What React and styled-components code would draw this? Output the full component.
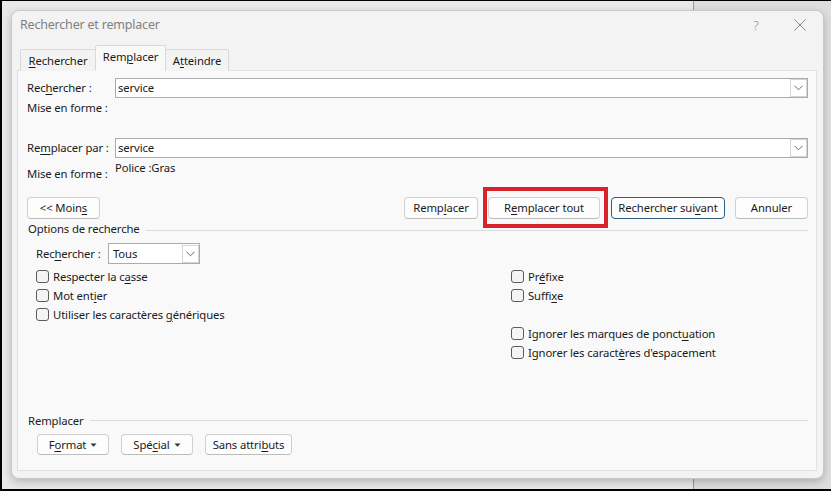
import React from "react";
import styled, { createGlobalStyle } from "styled-components";

const Global = createGlobalStyle`
  html, body { margin: 0; padding: 0; }
  body {
    font-family: "Noto Sans", "Liberation Sans", sans-serif;
    font-size: 11.3px;
    letter-spacing: -0.12px;
    color: #1b1b1b;
  }
  u { text-decoration: underline; text-underline-offset: 2px; text-decoration-thickness: 1px; }
`;

const Screen = styled.div`
  width: 831px;
  height: 491px;
  box-sizing: border-box;
  border-top: 1px solid #000;
  border-left: 2px solid #000;
  border-bottom: 2px solid #000;
  padding: 9px 0 0 9px;
  background: linear-gradient(to right, #e9e9e9 691px, #9a9a9a 691px, #9a9a9a 692px, #dedede 692px);
  overflow: hidden;
`;

const Dialog = styled.div`
  width: 813px;
  height: 469px;
  box-sizing: border-box;
  border: 1px solid #c9c9c9;
  border-radius: 8px;
  background: #f3f3f3;
  box-shadow: 0 3px 8px rgba(0, 0, 0, 0.22);
  display: flex;
  flex-direction: column;
`;

const TitleBar = styled.div`
  height: 34px;
  box-sizing: border-box;
  display: flex;
  align-items: flex-start;
  padding: 6px 1px 0 8px;
`;

const Title = styled.div`
  flex: 1;
  font-size: 12.5px;
  letter-spacing: -0.2px;
  line-height: 16px;
  color: #808080;
`;

const WinButton = styled.div`
  width: 44px;
  height: 16px;
  display: flex;
  align-items: center;
  justify-content: center;
  color: #8a8a8a;
  font-size: 13px;
  font-weight: 300;
  line-height: 16px;
`;

const TabRow = styled.div`
  display: flex;
  align-items: flex-end;
  height: 26px;
  padding-left: 8px;
  margin-bottom: -1px;
  position: relative;
  z-index: 1;
`;

const Tab = styled.div`
  height: ${(p) => (p.$active ? "26px" : "22px")};
  box-sizing: border-box;
  width: ${(p) => p.$w}px;
  margin-left: ${(p) => (p.$first ? "0" : "-1px")};
  border: 1px solid #d9d9d9;
  border-bottom: ${(p) => (p.$active ? "1px solid #f9f9f9" : "none")};
  border-radius: 2px 2px 0 0;
  background: ${(p) => (p.$active ? "#f9f9f9" : "#f3f3f3")};
  display: flex;
  align-items: center;
  justify-content: center;
  padding-top: 0;
  padding-bottom: ${(p) => (p.$active ? "3px" : "1px")};
`;

const Panel = styled.div`
  flex: 1;
  margin: 0 6px 7px 5px;
  border: 1px solid #e1e1e1;
  background: #f9f9f9;
  padding: 7px 8px 15px 9px;
  display: flex;
  flex-direction: column;
`;

const FieldRow = styled.div`
  display: flex;
  align-items: center;
  margin-top: ${(p) => p.$mt || 0}px;
`;

const Label = styled.div`
  width: ${(p) => p.$w || 88}px;
  flex: none;
  line-height: 16px;
  padding-top: ${(p) => p.$pt || 0}px;
`;

const InputBox = styled.div`
  flex: 1;
  height: 20px;
  box-sizing: border-box;
  border: 1px solid #ababab;
  background: #fff;
  display: flex;
  align-items: center;
  padding-left: 2px;
`;

const InputText = styled.div`
  flex: 1;
  line-height: 16px;
`;

const DropBtn = styled.div`
  width: 17px;
  height: 18px;
  box-sizing: border-box;
  border: 1px solid #d4d4d4;
  background: #fff;
  display: flex;
  align-items: center;
  justify-content: center;
`;

const FormatRow = styled.div`
  display: flex;
  align-items: flex-start;
  height: ${(p) => p.$h}px;
`;

const FormatValue = styled.div`
  line-height: 16px;
  padding-top: ${(p) => p.$pt || 0}px;
`;

const ButtonRow = styled.div`
  display: flex;
  align-items: center;
  margin-top: ${(p) => p.$mt || 0}px;
  padding-left: ${(p) => p.$pl || 0}px;
  gap: ${(p) => p.$gap || 0}px;
`;

const Spacer = styled.div`
  flex: 1;
`;

const ButtonGroup = styled.div`
  display: flex;
  align-items: center;
`;

const Button = styled.div`
  width: ${(p) => p.$w}px;
  height: ${(p) => p.$h || 22}px;
  margin-left: ${(p) => p.$ml || 0}px;
  box-sizing: border-box;
  border: 1px solid ${(p) => (p.$primary ? "#2c5e86" : "#d0d0d0")};
  border-bottom-color: ${(p) => (p.$primary ? "#2c5e86" : "#bcbcbc")};
  border-radius: 4px;
  background: #fdfdfd;
  display: flex;
  align-items: center;
  justify-content: center;
  line-height: 16px;
  position: relative;
`;

const Highlight = styled.div`
  position: absolute;
  top: -11px;
  left: -6px;
  right: -9px;
  bottom: -10px;
  border: 4px solid #d7232b;
  pointer-events: none;
`;

const SectionHeader = styled.div`
  display: flex;
  align-items: center;
  gap: 6px;
  padding-left: 1px;
  margin-top: ${(p) => p.$mt || 0}px;
  line-height: 16px;
  &::after {
    content: "";
    flex: 1;
    height: 1px;
    background: #dcdcdc;
    margin-top: ${(p) => p.$lineOff || 0}px;
  }
`;

const Options = styled.div`
  display: flex;
  padding-left: 9px;
  margin-top: 6px;
`;

const Column = styled.div`
  width: ${(p) => (p.$w ? `${p.$w}px` : "auto")};
  display: flex;
  flex-direction: column;
  padding-top: ${(p) => p.$pt || 0}px;
`;

const SelectRow = styled.div`
  display: flex;
  align-items: center;
  height: 21px;
  margin-bottom: 3px;
`;

const SelectBox = styled.div`
  width: 92px;
  height: 21px;
  box-sizing: border-box;
  border: 1px solid #ababab;
  background: #fff;
  display: flex;
  align-items: center;
  padding-left: 4px;
`;

const CheckRow = styled.div`
  display: flex;
  align-items: center;
  height: 19px;
  gap: 4px;
  line-height: 16px;
`;

const Box = styled.div`
  width: 13px;
  height: 13px;
  box-sizing: border-box;
  border: 1px solid #5c5c5c;
  border-radius: 3px;
  background: #f4f4f4;
  flex: none;
`;

const Chevron = () => (
  <svg width="9" height="6" viewBox="0 0 9 6">
    <polyline points="0.5,0.8 4.5,4.8 8.5,0.8" fill="none" stroke="#6a6a6a" strokeWidth="1" />
  </svg>
);

const Caret = () => (
  <svg width="7" height="4" viewBox="0 0 7 4" style={{ marginLeft: 4 }}>
    <polygon points="0.5,0.5 6.5,0.5 3.5,3.8" fill="#333" />
  </svg>
);

const CloseIcon = () => (
  <svg width="12" height="12" viewBox="0 0 12 12">
    <path d="M0.5 0.5 L11.5 11.5 M11.5 0.5 L0.5 11.5" stroke="#8a8a8a" strokeWidth="1" />
  </svg>
);

const Check = ({ children }) => (
  <CheckRow>
    <Box />
    <span>{children}</span>
  </CheckRow>
);

export default function App() {
  return (
    <>
      <Global />
      <Screen>
        <Dialog>
          <TitleBar>
            <Title>Rechercher et remplacer</Title>
            <WinButton>?</WinButton>
            <WinButton>
              <CloseIcon />
            </WinButton>
          </TitleBar>
          <TabRow>
            <Tab $first $w={76}>
              <span><u>R</u>echercher</span>
            </Tab>
            <Tab $active $w={71}>
              <span>Rem<u>p</u>lacer</span>
            </Tab>
            <Tab $w={64}>
              <span>A<u>t</u>teindre</span>
            </Tab>
          </TabRow>
          <Panel>
            <FieldRow>
              <Label>Rec<u>h</u>ercher :</Label>
              <InputBox>
                <InputText>service</InputText>
                <DropBtn><Chevron /></DropBtn>
              </InputBox>
            </FieldRow>
            <FormatRow $h={17}>
              <Label $pt={2}>Mise en forme :</Label>
            </FormatRow>
            <FieldRow $mt={23}>
              <Label>Re<u>m</u>placer par :</Label>
              <InputBox>
                <InputText>service</InputText>
                <DropBtn><Chevron /></DropBtn>
              </InputBox>
            </FieldRow>
            <FormatRow $h={25}>
              <Label $pt={8}>Mise en forme :</Label>
              <FormatValue $pt={2}>Police :Gras</FormatValue>
            </FormatRow>
            <ButtonRow $mt={14}>
              <Button $w={73}>&lt;&lt; Moin<u>s</u></Button>
              <Spacer />
              <ButtonGroup>
                <Button $w={74}>Remp<u>l</u>acer</Button>
                <Button $w={112} $ml={10}>
                  R<u>e</u>mplacer tout
                  <Highlight />
                </Button>
                <Button $w={114} $ml={11} $primary>Rechercher sui<u>v</u>ant</Button>
                <Button $w={73} $ml={10}>Annuler</Button>
              </ButtonGroup>
            </ButtonRow>
            <SectionHeader $mt={2} $lineOff={2}>Options de recherche</SectionHeader>
            <Options>
              <Column $w={475}>
                <SelectRow>
                  <Label $w={72}>Rec<u>h</u>ercher :</Label>
                  <SelectBox>
                    <InputText>Tous</InputText>
                    <DropBtn><Chevron /></DropBtn>
                  </SelectBox>
                </SelectRow>
                <Check>Respecter la c<u>a</u>sse</Check>
                <Check>Mot ent<u>i</u>er</Check>
                <Check>Utiliser les caractères <u>g</u>énériques</Check>
              </Column>
              <Column $pt={24}>
                <Check>Pr<u>é</u>fixe</Check>
                <Check>Suffi<u>x</u>e</Check>
                <CheckRow />
                <Check>Ignorer les marques de ponct<u>u</u>ation</Check>
                <Check>Ignorer les caract<u>è</u>res d'espacement</Check>
              </Column>
            </Options>
            <Spacer />
            <SectionHeader $lineOff={-1}>Remplacer</SectionHeader>
            <ButtonRow $mt={5} $pl={10} $gap={12}>
              <Button $w={72} $h={21}>F<u>o</u>rmat<Caret /></Button>
              <Button $w={72} $h={21}>Spé<u>c</u>ial<Caret /></Button>
              <Button $w={87} $h={21}>Sans attri<u>b</u>uts</Button>
            </ButtonRow>
          </Panel>
        </Dialog>
      </Screen>
    </>
  );
}
